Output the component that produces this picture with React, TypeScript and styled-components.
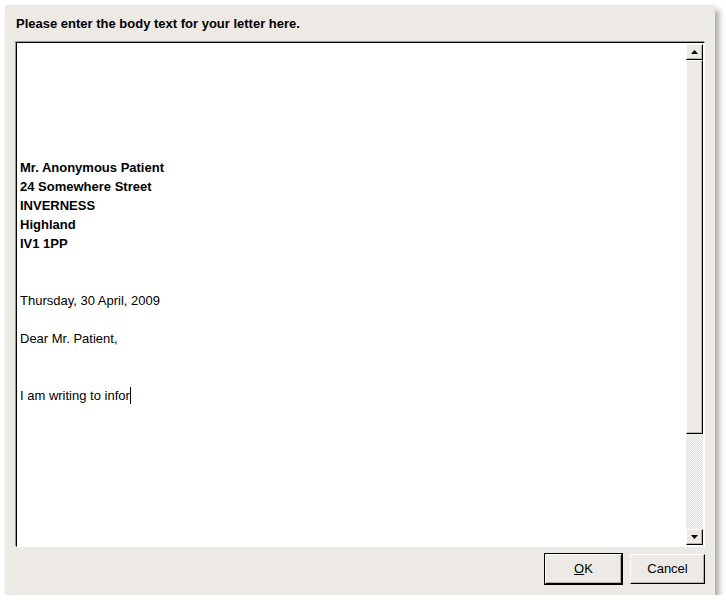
import React from "react";
import styled, { createGlobalStyle } from "styled-components";

const Global = createGlobalStyle`
  html, body {
    margin: 0;
    padding: 0;
    background: #ffffff;
  }
  body {
    font-family: "Liberation Sans", Arial, sans-serif;
    font-size: 13px;
    color: #000;
  }
`;

const Window = styled.div`
  margin: 5px 0 0 5px;
  width: 710px;
  height: 590px;
  box-sizing: border-box;
  background: #edeae6;
  box-shadow: 4px 5px 6px rgba(0, 0, 0, 0.35);
  padding: 9px 10px 11px 11px;
  display: flex;
  flex-direction: column;
`;

const Label = styled.div`
  font-weight: bold;
  font-size: 13px;
  line-height: 20px;
  height: 20px;
  margin-bottom: 8px;
`;

const Frame = styled.div`
  flex: 1;
  display: flex;
  background: #fff;
  border-top: 1px solid #000;
  border-left: 1px solid #000;
  border-right: 1px solid #fff;
  border-bottom: 1px solid #fff;
  box-shadow: -1px -1px 0 #9a9893;
  padding: 1px 1px 1px 0;
  min-height: 0;
`;

const TextArea = styled.div`
  flex: 1;
  padding: 0 0 0 3px;
  font-size: 13px;
  line-height: 19px;
  white-space: pre;
  overflow: hidden;
`;

const Line = styled.div<{ $bold?: boolean }>`
  height: 19px;
  font-weight: ${(p) => (p.$bold ? "bold" : "normal")};
`;

const Caret = styled.span`
  display: inline-block;
  width: 1px;
  height: 17px;
  background: #000;
  vertical-align: -4px;
`;

const ScrollBar = styled.div`
  width: 17px;
  display: flex;
  flex-direction: column;
`;

const Bevel = styled.div`
  box-sizing: border-box;
  background: #edeae6;
  border-top: 1px solid #fff;
  border-left: 1px solid #fff;
  border-right: 1px solid #000;
  border-bottom: 1px solid #000;
  box-shadow: inset -1px -1px 0 #b5b2ac;
`;

const Arrow = styled(Bevel)`
  height: 16px;
  display: flex;
  align-items: center;
  justify-content: center;
`;

const Thumb = styled(Bevel)`
  height: 374px;
`;

const Trough = styled.div`
  flex: 1;
  background-color: #f5f4f2;
  background-image: linear-gradient(45deg, #e6e3df 25%, transparent 25%, transparent 75%, #e6e3df 75%),
    linear-gradient(45deg, #e6e3df 25%, transparent 25%, transparent 75%, #e6e3df 75%);
  background-size: 2px 2px;
  background-position: 0 0, 1px 1px;
`;

const Buttons = styled.div`
  display: flex;
  justify-content: flex-end;
  gap: 7px;
  margin-top: 7px;
`;

const Button = styled.button<{ $default?: boolean }>`
  width: ${(p) => (p.$default ? "77px" : "75px")};
  height: 30px;
  box-sizing: border-box;
  background: #edeae6;
  font-family: "Liberation Sans", Arial, sans-serif;
  font-size: 13px;
  color: #000;
  padding: 0 0 1px;
  border-top: 1px solid #fff;
  border-left: 1px solid #fff;
  border-right: 1px solid #000;
  border-bottom: 1px solid #000;
  box-shadow: ${(p) =>
    p.$default
      ? "0 0 0 1px #000, inset -1px -1px 0 #b5b2ac"
      : "inset -1px -1px 0 #b5b2ac"};
  margin-right: ${(p) => (p.$default ? "1px" : "0")};
`;

const Mnemonic = styled.span`
  text-decoration: underline;
`;

const lines: { text: string; bold?: boolean }[] = [
  { text: "" },
  { text: "" },
  { text: "" },
  { text: "" },
  { text: "" },
  { text: "" },
  { text: "Mr. Anonymous Patient", bold: true },
  { text: "24 Somewhere Street", bold: true },
  { text: "INVERNESS", bold: true },
  { text: "Highland", bold: true },
  { text: "IV1 1PP", bold: true },
  { text: "" },
  { text: "" },
  { text: "Thursday, 30 April, 2009" },
  { text: "" },
  { text: "Dear Mr. Patient," },
  { text: "" },
  { text: "" },
];

export default function App() {
  return (
    <>
      <Global />
      <Window>
        <Label>Please enter the body text for your letter here.</Label>
        <Frame>
          <TextArea>
            {lines.map((l, i) => (
              <Line key={i} $bold={l.bold}>
                {l.text}
              </Line>
            ))}
            <Line>
              I am writing to infor
              <Caret />
            </Line>
          </TextArea>
          <ScrollBar>
            <Arrow>
              <svg width="7" height="4" viewBox="0 0 7 4">
                <path d="M0 4 L3.5 0 L7 4 Z" fill="#000" />
              </svg>
            </Arrow>
            <Thumb />
            <Trough />
            <Arrow>
              <svg width="7" height="4" viewBox="0 0 7 4">
                <path d="M0 0 L7 0 L3.5 4 Z" fill="#000" />
              </svg>
            </Arrow>
          </ScrollBar>
        </Frame>
        <Buttons>
          <Button $default>
            <Mnemonic>O</Mnemonic>K
          </Button>
          <Button>Cancel</Button>
        </Buttons>
      </Window>
    </>
  );
}
